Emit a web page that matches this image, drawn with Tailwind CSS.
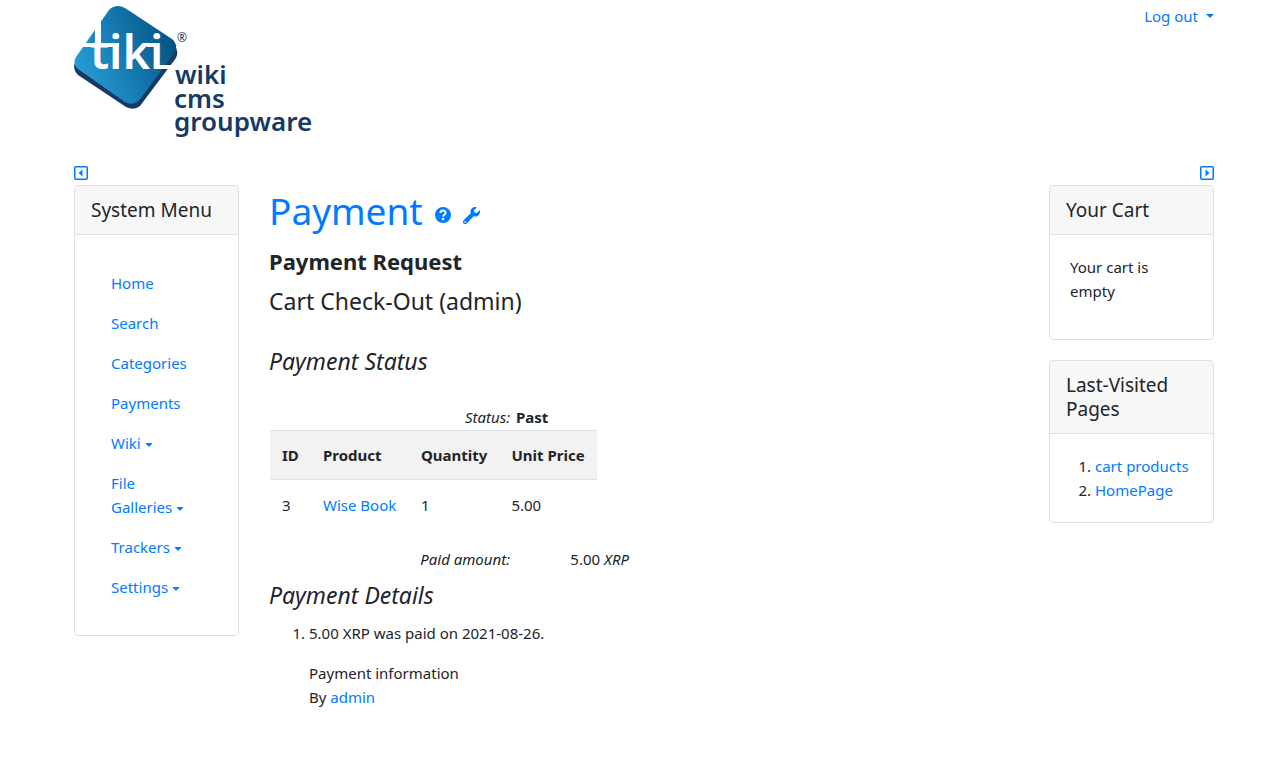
<!DOCTYPE html>
<html lang="en">
<head>
  <meta charset="UTF-8" />
  <meta name="viewport" content="width=device-width, initial-scale=1.0" />
  <title>Payment</title>
  <script src="https://cdn.jsdelivr.net/npm/@tailwindcss/browser@4"></script>
</head>
<body class="bg-white text-[#212529] text-[15px] leading-6 font-['Noto_Sans',sans-serif]">
  <div class="max-w-[1148px] mx-auto pl-2">
    <header class="flex justify-between items-start pt-1">
      <a href="#" aria-label="Tiki Wiki CMS Groupware">
        <svg class="block" width="246" height="136" viewBox="74 4 246 136">
          <defs>
            <linearGradient id="tile" x1="0" y1="0.7" x2="1" y2="0.3">
              <stop offset="0" stop-color="#2a9fd8" />
              <stop offset="0.5" stop-color="#1579b0" />
              <stop offset="1" stop-color="#04507f" />
            </linearGradient>
          </defs>
          <path d="M74 65Q74 71 78 75L126 107Q134 111 140 106L176 58Q179 52 175 46L120 20Z" fill="#153a63" />
          <path d="M109 10Q116 3 125 8L172 39Q179 45 174 53L141 98Q134 107 125 102L78 69Q72 64 76 57Z" fill="url(#tile)" />
          <g fill="none" stroke="#fff">
            <path d="M82 45H119" stroke-width="4" />
            <path d="M98 18V46" stroke-width="6" />
            <path d="M147 45H157" stroke-width="4" />
            <path d="M157 67H172" stroke-width="4" />
          </g>
          <g font-family="'Noto Sans', sans-serif">
            <text x="90" y="69" font-size="47" font-weight="600" fill="#fff">tiki</text>
            <text x="177" y="42" font-size="12" fill="#153a63">®</text>
            <g font-size="26" font-weight="600" fill="#153a63">
              <text x="175" y="84">wiki</text>
              <text x="174" y="108">cms</text>
              <text x="174" y="131">groupware</text>
            </g>
          </g>
        </svg>
      </a>
      <button class="flex items-center gap-2 text-[#007bff]">Log out
        <svg width="8" height="4" viewBox="0 0 8 4" fill="currentColor"><path d="M0 0H8L4 4Z" /></svg>
      </button>
    </header>

    <div class="flex justify-between pt-[26px] pb-[5px] text-[#007bff]">
      <button aria-label="Hide left column">
        <svg class="block" width="14" height="14" viewBox="0 0 14 14"><rect x="0.750" y="0.750" width="12.500" height="12.500" rx="1" fill="none" stroke="currentColor" stroke-width="1.500" /><path d="M8.500 3.500V10.500L4.500 7Z" fill="currentColor" /></svg>
      </button>
      <button aria-label="Hide right column">
        <svg class="block" width="14" height="14" viewBox="0 0 14 14"><rect x="0.750" y="0.750" width="12.500" height="12.500" rx="1" fill="none" stroke="currentColor" stroke-width="1.500" /><path d="M5.500 3.500V10.500L9.500 7Z" fill="currentColor" /></svg>
      </button>
    </div>

    <div class="grid grid-cols-12 gap-x-[30px] items-start">
      <aside class="col-span-2 border border-[#dfdfdf] rounded">
        <h3 class="px-4 py-3 bg-[#f7f7f7] border-b border-[#dfdfdf] rounded-t text-[19px] leading-6">System Menu</h3>
        <nav class="p-9 text-[#007bff]">
          <ul>
            <li><a href="#" class="block pb-4">Home</a></li>
            <li><a href="#" class="block pb-4">Search</a></li>
            <li><a href="#" class="block pb-4">Categories</a></li>
            <li><a href="#" class="block pb-4">Payments</a></li>
            <li><a href="#" class="block pb-4">Wiki <svg class="inline" width="8" height="4" viewBox="0 0 9 5" fill="currentColor"><path d="M1 0H8Q9 0 8.500 1L5 4.500Q4.500 5 4 4.500L0.500 1Q0 0 1 0Z" /></svg></a></li>
            <li><a href="#" class="block pb-4">File<br />Galleries <svg class="inline" width="8" height="4" viewBox="0 0 9 5" fill="currentColor"><path d="M1 0H8Q9 0 8.500 1L5 4.500Q4.500 5 4 4.500L0.500 1Q0 0 1 0Z" /></svg></a></li>
            <li><a href="#" class="block pb-4">Trackers <svg class="inline" width="8" height="4" viewBox="0 0 9 5" fill="currentColor"><path d="M1 0H8Q9 0 8.500 1L5 4.500Q4.500 5 4 4.500L0.500 1Q0 0 1 0Z" /></svg></a></li>
            <li><a href="#" class="block">Settings <svg class="inline" width="8" height="4" viewBox="0 0 9 5" fill="currentColor"><path d="M1 0H8Q9 0 8.500 1L5 4.500Q4.500 5 4 4.500L0.500 1Q0 0 1 0Z" /></svg></a></li>
          </ul>
        </nav>
      </aside>

      <main class="col-span-8">
        <div class="flex items-center gap-3 text-[#007bff]">
          <h1 class="text-[37px] leading-[52px]"><a href="#">Payment</a></h1>
          <a href="#" class="pt-2" aria-label="Help">
            <svg width="16" height="16" viewBox="0 0 16 16"><circle cx="8" cy="8" r="8" fill="currentColor" /><path d="M5.400 6C5.600 2.800 10.700 2.800 10.600 6C10.500 7.800 8.200 7.700 8.100 9.600" fill="none" stroke="#fff" stroke-width="2" /><circle cx="8.100" cy="12" r="1.300" fill="#fff" /></svg>
          </a>
          <a href="#" class="pt-2" aria-label="Configure">
            <svg width="17" height="17" viewBox="0 0 512 512" fill="currentColor"><path d="M507.730 109.100c-2.240-9.030-13.540-12.090-20.120-5.510l-74.360 74.360-67.880-11.310-11.310-67.880 74.360-74.360c6.620-6.620 3.430-17.900-5.660-20.160-47.380-11.740-99.550.910-136.580 37.930-39.640 39.640-50.550 97.100-34.050 147.200L18.740 402.760c-24.990 24.990-24.990 65.510 0 90.500 24.990 24.990 65.510 24.990 90.500 0l213.210-213.210c50.120 16.710 107.470 5.680 147.370-34.220 37.070-37.070 49.700-89.320 37.910-136.730zM64 472c-13.250 0-24-10.750-24-24 0-13.260 10.750-24 24-24s24 10.740 24 24c0 13.250-10.750 24-24 24z" /></svg>
          </a>
        </div>
        <h2 class="pt-2 text-[22px] leading-8 font-bold">Payment Request</h2>
        <h2 class="pt-2 text-[23px] leading-8">Cart Check-Out (admin)</h2>
        <h2 class="pt-7 text-[23px] leading-8 italic">Payment Status</h2>

        <dl class="grid grid-cols-[241px_1fr] gap-x-1.5 pt-7">
          <dt class="text-right italic">Status:</dt>
          <dd class="font-bold">Past</dd>
        </dl>
        <table class="ml-px mt-px">
          <thead class="bg-[#f2f2f2] border-y border-[#dee2e6]">
            <tr class="text-left whitespace-nowrap">
              <th class="p-3 w-[41px] font-bold">ID</th>
              <th class="p-3 w-[98px] font-bold">Product</th>
              <th class="p-3 w-[90px] font-bold">Quantity</th>
              <th class="p-3 font-bold">Unit Price</th>
            </tr>
          </thead>
          <tbody>
            <tr>
              <td class="px-3 py-[13px]">3</td>
              <td class="px-3 py-[13px]"><a href="#" class="text-[#007bff]">Wise Book</a></td>
              <td class="px-3 py-[13px]">1</td>
              <td class="px-3 py-[13px]">5.00</td>
            </tr>
          </tbody>
        </table>
        <dl class="grid grid-cols-[241px_119px] pt-[17px]">
          <dt class="text-right italic">Paid amount:</dt>
          <dd class="text-right">5.00 <i>XRP</i></dd>
        </dl>

        <h2 class="pt-2 text-[23px] leading-8 italic">Payment Details</h2>
        <ol class="list-decimal pl-10 pt-2.5">
          <li>5.00 XRP was paid on 2021-08-26.
            <p class="pt-4">Payment information</p>
            <p>By <a href="#" class="text-[#007bff]">admin</a></p>
          </li>
        </ol>
      </main>

      <aside class="col-span-2 flex flex-col gap-5">
        <section class="border border-[#dfdfdf] rounded">
          <h3 class="px-4 py-3 bg-[#f7f7f7] border-b border-[#dfdfdf] rounded-t text-[19px] leading-6">Your Cart</h3>
          <p class="px-5 pt-5 pb-9">Your cart is empty</p>
        </section>
        <section class="border border-[#dfdfdf] rounded">
          <h3 class="px-4 py-3 bg-[#f7f7f7] border-b border-[#dfdfdf] rounded-t text-[19px] leading-6">Last-Visited Pages</h3>
          <ol class="list-decimal pl-[45px] py-5">
            <li><a href="#" class="text-[#007bff]">cart products</a></li>
            <li><a href="#" class="text-[#007bff]">HomePage</a></li>
          </ol>
        </section>
      </aside>
    </div>
  </div>
</body>
</html>
